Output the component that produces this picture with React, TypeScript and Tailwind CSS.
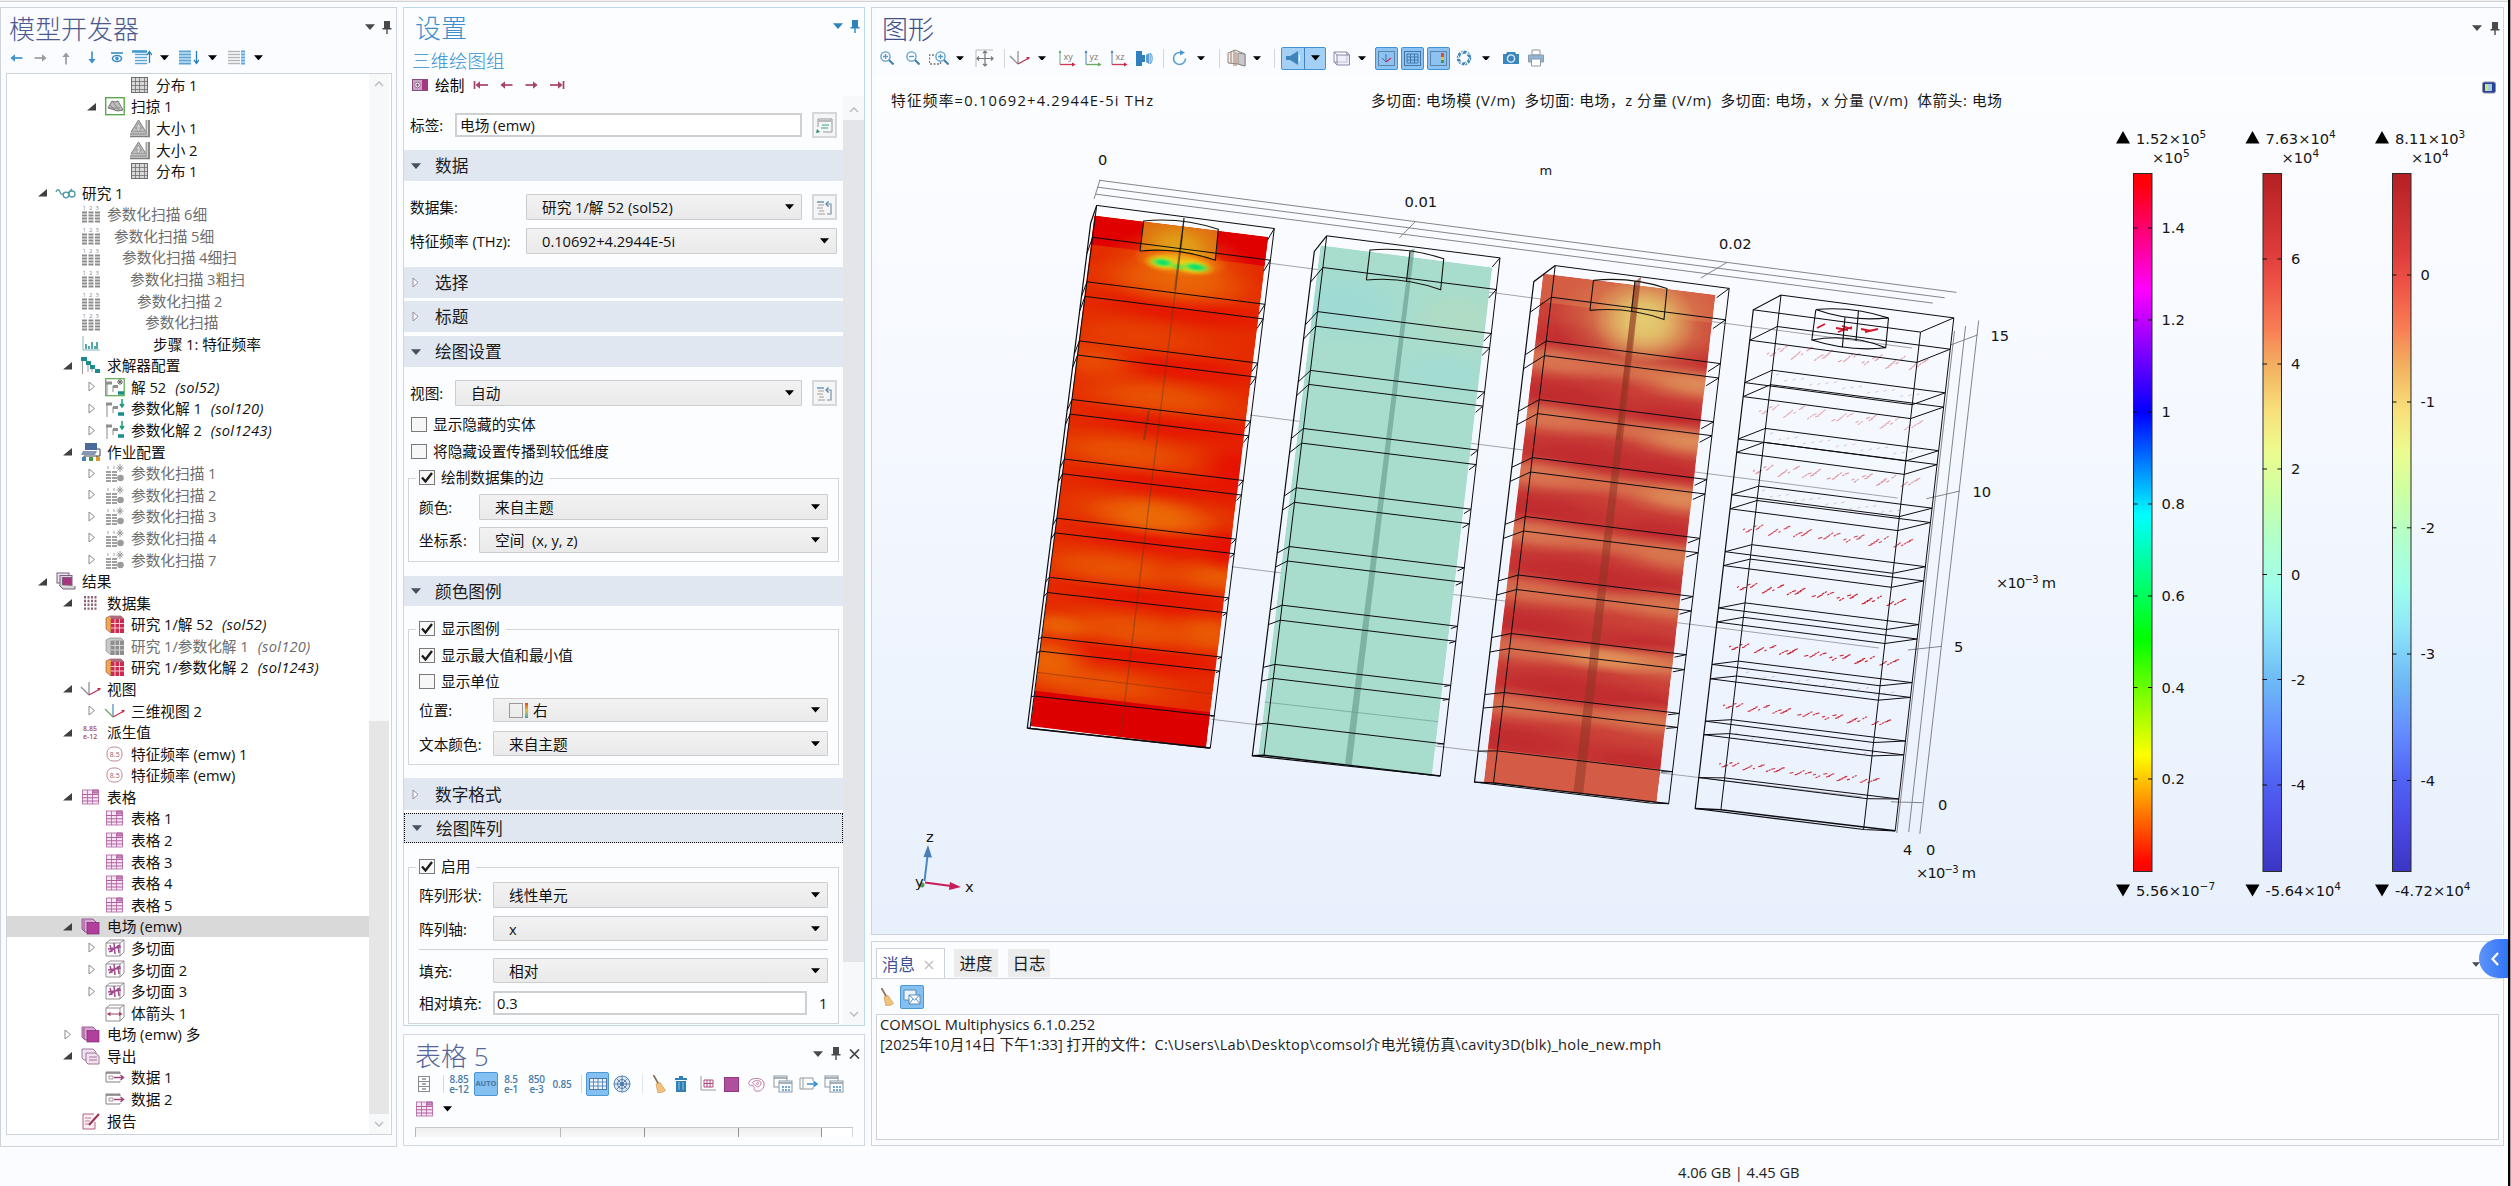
import React from 'react';

type Pt = [number, number];

/* ---------- small shared glyphs ---------- */

function Caret({ c = '#000', w = 10 }: { c?: string; w?: number }) {
  return (
    <svg width={w} height={w * 0.6} viewBox="0 0 10 6" className="shrink-0">
      <path d="M0 .3h10L5 6z" fill={c} />
    </svg>
  );
}

function Pin({ c = '#4a4a4a' }: { c?: string }) {
  return (
    <svg width="10" height="13" viewBox="0 0 10 13" className="shrink-0">
      <path d="M2 0h6v7h1.5v1.5H5.7V13H4.3V8.500H.5V7H2z" fill={c} />
    </svg>
  );
}

function Arrow({ dir, c, bar }: { dir: 'l' | 'r' | 'u' | 'd'; c: string; bar?: boolean }) {
  const rot = { l: 180, r: 0, u: 270, d: 90 }[dir];
  return (
    <svg width="16" height="16" viewBox="0 0 16 16">
      <g transform={`rotate(${rot} 8 8)`} fill="none" stroke={c} strokeWidth="1.7">
        <path d={bar ? 'M1 8h11' : 'M1.500 8h11'} />
        <path d="M9 4.300L13.500 8L9 11.700z" fill={c} stroke="none" />
        {bar && <path d="M14.500 4v8" />}
      </g>
    </svg>
  );
}

/* ---------- tree ---------- */

type IconName =
  | 'grid' | 'sweep' | 'size' | 'study' | 'param' | 'step' | 'solver' | 'sol' | 'solp' | 'job' | 'jobp'
  | 'results' | 'dataset' | 'cube' | 'cubeg' | 'view' | 'view3' | 'deriv' | 'eval' | 'table' | 'group'
  | 'slice' | 'varrow' | 'export' | 'data' | 'report';

function Bars({ c }: { c: string }) {
  return (
    <g>
      {[1, 7.5, 14].map((x, i) => (
        <g key={x}>
          <text x={x + 0.5} y="5" fontSize="6" fill={c}>{i + 1}</text>
          {[7.5, 10.5, 13.5, 16.5].map((y) => (
            <path key={y} d={`M${x} ${y}h5`} stroke={c} strokeWidth="2" />
          ))}
        </g>
      ))}
    </g>
  );
}

function SolGlyph({ arrow }: { arrow: boolean }) {
  return (
    <g fill="none">
      <path d="M2 18V5h5M8 14V8h5" stroke="#8a8a8a" />
      <path d="M1 5h6M8 8.500h5" stroke="#8f8f8f" strokeWidth="3" />
      <path d="M13 15h6" stroke="#1b8c8c" strokeWidth="3.500" />
      {arrow ? (
        <path d="M17 0v7M15 5l2 3 2-3" stroke="#1b9a80" strokeWidth="1.500" />
      ) : (
        <path d="M15 1v6M12 4h6M13 2l4 4M17 2l-4 4" stroke="#666" strokeWidth="1" />
      )}
    </g>
  );
}

function TreeIcon({ name }: { name: IconName }) {
  const body: Record<IconName, React.ReactNode> = {
    grid: (
      <g stroke="#6e6e6e" fill="none">
        <rect x="1.500" y="1.500" width="16" height="15" fill="#d9d9d9" />
        <path d="M5.500 2v14M9.500 2v14M14.500 2v14M2 5.500h15M2 9.500h15M2 13.500h15" strokeWidth=".8" />
      </g>
    ),
    sweep: (
      <g>
        <rect x=".7" y=".7" width="18.500" height="17" fill="#fff" stroke="#5aa84e" strokeWidth="1.400" />
        <path d="M3 11L7 4l3 1 3-1 5 9-5 1z" fill="#bdbdbd" stroke="#777" />
        <path d="M5 8l6 6M8 5l6 8M4 11h11" stroke="#777" strokeWidth=".7" />
      </g>
    ),
    size: (
      <g>
        <path d="M8.500 1L16 13H1z" fill="#bdbdbd" stroke="#808080" />
        <path d="M5 9h7M8.500 4L11 9l-2.500 4L6 9z" fill="#dcdcdc" stroke="#808080" strokeWidth=".6" />
        <path d="M0 15h16.500V1" stroke="#a5a5a5" fill="none" strokeWidth="2" />
        <path d="M0 17.300h19V1" stroke="#7d7d7d" fill="none" strokeWidth="1.800" />
      </g>
    ),
    study: (
      <g fill="none" stroke="#4f9aa5" strokeWidth="1.300">
        <path d="M0 8c1-3 3-3 4 0s3 3 4 1" />
        <circle cx="10" cy="11" r="2.800" />
        <circle cx="16" cy="10" r="3" />
        <path d="M12 9l4-4" />
      </g>
    ),
    param: <Bars c="#8b8b8b" />,
    step: (
      <g stroke="#1b8c8c" fill="none">
        <path d="M2 1v14h17" stroke="#7fb5c2" />
        <path d="M5 9v5M8 11v3M11 7v7M14 11v3M16 7v7" strokeWidth="1.500" />
      </g>
    ),
    solver: (
      <g>
        <path d="M1.500 18V3M7 16V7M11 16v-6" stroke="#9a9a9a" fill="none" />
        <path d="M0 1h6v4H0zM5 5h5v4H5zM9 9h5v4H9zM14 13h5v4h-5z" fill="#1b8c8c" />
      </g>
    ),
    sol: (
      <g>
        <rect x=".7" y=".7" width="18.500" height="17" fill="#fff" stroke="#5aa84e" strokeWidth="1.200" />
        <SolGlyph arrow={false} />
      </g>
    ),
    solp: <SolGlyph arrow />,
    job: (
      <g>
        <path d="M4 0h12v7H4z" fill="#4b6a9c" />
        <path d="M2 8h14l-2 4H0z" fill="#8497b5" />
        <path d="M16 6h3v7H3v3M16 13v3" fill="none" stroke="#444" />
        <rect x="1" y="14" width="4" height="4" fill="#4b7fb5" />
        <rect x="8" y="14" width="4" height="4" fill="#3f9a4d" />
        <rect x="15" y="14" width="4" height="4" fill="#e09a2a" />
      </g>
    ),
    jobp: (
      <g>
        {[1, 7].map((x) => (
          <g key={x} stroke="#a0a0a0" strokeWidth="1.800">
            <path d={`M${x} 8h5M${x} 11h5M${x} 14h5M${x} 17h5`} />
            <path d={`M${x + 2} 2v3`} strokeWidth="1" />
          </g>
        ))}
        <path d="M15 0v8M11.500 4h7M12.500 1.500l5 5M17.500 1.500l-5 5" stroke="#999" />
        <circle cx="15.500" cy="14" r="3.300" fill="#9b9b9b" />
      </g>
    ),
    results: (
      <g stroke="#77607a">
        <rect x="1" y="1" width="12" height="10" fill="#efe3ee" />
        <rect x="4" y="3.500" width="12" height="10" fill="#e8cfe5" />
        <rect x="6.500" y="5.500" width="9" height="8" fill="#a8357f" />
        <path d="M3 13l4 4h12v-3" fill="#d8d8d8" />
      </g>
    ),
    dataset: (
      <g stroke="#8d6272" strokeWidth="2">
        {[4, 7.5, 11, 14.5].map((x) => (
          <path key={x} d={`M${x} 2v14`} strokeDasharray="2.400 1.400" />
        ))}
      </g>
    ),
    cube: (
      <g>
        <path d="M1 3l4-2h11l3 3H6v14l-5-4z" fill="#f0a850" stroke="#9b5a50" strokeWidth=".7" />
        <path d="M5 1h11l3 3H6z" fill="#b06a80" />
        <rect x="6" y="4" width="13" height="14" fill="#cc2a4e" />
        <path d="M6 8.500h13M6 13h13M10 4v14M14.500 4v14" stroke="#f5c9cf" strokeWidth="1" />
      </g>
    ),
    cubeg: (
      <g>
        <path d="M1 3l4-2h11l3 3H6v14l-5-4z" fill="#c9c9c9" stroke="#8a8a8a" strokeWidth=".7" />
        <rect x="6" y="4" width="13" height="14" fill="#8e8e8e" />
        <path d="M6 8.500h13M6 13h13M10 4v14M14.500 4v14" stroke="#d5d5d5" strokeWidth="1" />
      </g>
    ),
    view: (
      <g fill="none" strokeWidth="1.200">
        <path d="M8 2v13M0 7l8 8" stroke="#8a8a8a" />
        <path d="M8 15l11-6" stroke="#b8304f" />
        <path d="M16 8l4 0-2 3z" fill="#b8304f" />
      </g>
    ),
    view3: (
      <g fill="none" strokeWidth="1.200">
        <path d="M8 2v13" stroke="#4a86c0" />
        <path d="M0 7l8 8" stroke="#6aa860" />
        <path d="M8 15l11-6" stroke="#c8304f" />
        <path d="M16 8l4 0-2 3z" fill="#c8304f" />
      </g>
    ),
    deriv: (
      <g fill="#a8506a" fontSize="7" fontWeight="600">
        <text x="2" y="8">8.85</text>
        <text x="2" y="16">e-12</text>
      </g>
    ),
    eval: (
      <g>
        <rect x="2" y="2" width="15" height="14" rx="6" fill="#fff" stroke="#c08a9d" />
        <text x="4.800" y="11.500" fontSize="7" fill="#a8506a">8.5</text>
      </g>
    ),
    table: (
      <g stroke="#b0609f" fill="none">
        <rect x="1.500" y="2" width="16" height="14" fill="#f6e6f3" strokeWidth=".8" />
        <path d="M1 6.500h17M1 9.800h17M1 13h17" strokeWidth="1.100" />
        <path d="M6.500 2v14M11.500 2v14" strokeWidth=".8" />
        <path d="M12 2h5v3h-5z" fill="#c98abc" />
      </g>
    ),
    group: (
      <g stroke="#7c2a72" strokeWidth=".7">
        <path d="M1 2h11l3 3v10H4L1 12z" fill="#d9a6d2" />
        <rect x="6" y="5.500" width="12" height="11.500" fill="#b23f9c" />
        <path d="M3 3v11" />
      </g>
    ),
    slice: (
      <g fill="none" stroke="#8a8088" strokeWidth=".9">
        <path d="M1 4l4-3h14v12l-4 4H1zM1 4h14v13M15 4l4-3" />
        <path d="M5 6l2 7M9 4l1 11M13 6l1 8M3 10l13-2M4 13l11-7" stroke="#a04a90" strokeWidth="1.500" />
      </g>
    ),
    varrow: (
      <g fill="none" stroke="#8a8088" strokeWidth=".9">
        <path d="M1 4l4-3h14v12l-4 4H1zM1 4h14v13M15 4l4-3" />
        <path d="M4 10h11M5.500 8.500L3 10l2.500 1.500M14 8.500l2.500 1.500-2.500 1.500" stroke="#a0406a" strokeWidth="1.200" />
      </g>
    ),
    export: (
      <g fill="#f0e2ee" stroke="#9a6690" strokeWidth=".9">
        <path d="M1 2h11l3 3v8H3L1 11z" />
        <path d="M5 6h9l4 3v8H7l-2-2z" />
        <path d="M8 10h8M8 13h8" />
      </g>
    ),
    data: (
      <g fill="none" stroke="#8a8088">
        <path d="M15 6V4H1v10h14v-1" />
        <path d="M1 5h14" strokeWidth="1.600" />
        <path d="M4 8h4v3H4z" strokeWidth=".8" />
        <path d="M9 9.500h9M15.500 7l3 2.500-3 2.500" stroke="#a0407a" strokeWidth="1.400" />
      </g>
    ),
    report: (
      <g fill="none" stroke="#b0607f">
        <path d="M14 10v7H2V2h11" fill="#fbeef2" />
        <path d="M4 6h6M4 9h5M4 12h5" strokeWidth=".8" />
        <path d="M8 13L18 2" stroke="#9c2f52" strokeWidth="2" />
      </g>
    ),
  };
  return (
    <svg width="20" height="18" viewBox="0 0 20 18" className="shrink-0 overflow-visible">
      {body[name]}
    </svg>
  );
}

interface Row {
  lvl: 1 | 2 | 3 | 4;
  icon: IconName;
  text: string;
  tag?: string;
  tri?: 'open' | 'closed';
  gray?: boolean;
  sel?: boolean;
  ml?: string;
}

const rows: Row[] = [
  { lvl: 4, icon: 'grid', text: '分布 1' },
  { lvl: 3, icon: 'sweep', text: '扫掠 1', tri: 'open' },
  { lvl: 4, icon: 'size', text: '大小 1' },
  { lvl: 4, icon: 'size', text: '大小 2' },
  { lvl: 4, icon: 'grid', text: '分布 1' },
  { lvl: 1, icon: 'study', text: '研究 1', tri: 'open' },
  { lvl: 2, icon: 'param', text: '参数化扫描 6细', gray: true },
  { lvl: 2, icon: 'param', text: '参数化扫描 5细', gray: true, ml: 'ml-[13px]' },
  { lvl: 2, icon: 'param', text: '参数化扫描 4细扫', gray: true, ml: 'ml-[21px]' },
  { lvl: 2, icon: 'param', text: '参数化扫描 3粗扫', gray: true, ml: 'ml-[29px]' },
  { lvl: 2, icon: 'param', text: '参数化扫描 2', gray: true, ml: 'ml-[36px]' },
  { lvl: 2, icon: 'param', text: '参数化扫描', gray: true, ml: 'ml-[44px]' },
  { lvl: 2, icon: 'step', text: '步骤 1: 特征频率', ml: 'ml-[52px]' },
  { lvl: 2, icon: 'solver', text: '求解器配置', tri: 'open' },
  { lvl: 3, icon: 'sol', text: '解 52', tag: '(sol52)', tri: 'closed' },
  { lvl: 3, icon: 'solp', text: '参数化解 1', tag: '(sol120)', tri: 'closed' },
  { lvl: 3, icon: 'solp', text: '参数化解 2', tag: '(sol1243)', tri: 'closed' },
  { lvl: 2, icon: 'job', text: '作业配置', tri: 'open' },
  { lvl: 3, icon: 'jobp', text: '参数化扫描 1', tri: 'closed', gray: true },
  { lvl: 3, icon: 'jobp', text: '参数化扫描 2', tri: 'closed', gray: true },
  { lvl: 3, icon: 'jobp', text: '参数化扫描 3', tri: 'closed', gray: true },
  { lvl: 3, icon: 'jobp', text: '参数化扫描 4', tri: 'closed', gray: true },
  { lvl: 3, icon: 'jobp', text: '参数化扫描 7', tri: 'closed', gray: true },
  { lvl: 1, icon: 'results', text: '结果', tri: 'open' },
  { lvl: 2, icon: 'dataset', text: '数据集', tri: 'open' },
  { lvl: 3, icon: 'cube', text: '研究 1/解 52', tag: '(sol52)' },
  { lvl: 3, icon: 'cubeg', text: '研究 1/参数化解 1', tag: '(sol120)', gray: true },
  { lvl: 3, icon: 'cube', text: '研究 1/参数化解 2', tag: '(sol1243)' },
  { lvl: 2, icon: 'view', text: '视图', tri: 'open' },
  { lvl: 3, icon: 'view3', text: '三维视图 2', tri: 'closed' },
  { lvl: 2, icon: 'deriv', text: '派生值', tri: 'open' },
  { lvl: 3, icon: 'eval', text: '特征频率 (emw) 1' },
  { lvl: 3, icon: 'eval', text: '特征频率 (emw)' },
  { lvl: 2, icon: 'table', text: '表格', tri: 'open' },
  { lvl: 3, icon: 'table', text: '表格 1' },
  { lvl: 3, icon: 'table', text: '表格 2' },
  { lvl: 3, icon: 'table', text: '表格 3' },
  { lvl: 3, icon: 'table', text: '表格 4' },
  { lvl: 3, icon: 'table', text: '表格 5' },
  { lvl: 2, icon: 'group', text: '电场 (emw)', tri: 'open', sel: true },
  { lvl: 3, icon: 'slice', text: '多切面', tri: 'closed' },
  { lvl: 3, icon: 'slice', text: '多切面 2', tri: 'closed' },
  { lvl: 3, icon: 'slice', text: '多切面 3', tri: 'closed' },
  { lvl: 3, icon: 'varrow', text: '体箭头 1' },
  { lvl: 2, icon: 'group', text: '电场 (emw) 多', tri: 'closed' },
  { lvl: 2, icon: 'export', text: '导出', tri: 'open' },
  { lvl: 3, icon: 'data', text: '数据 1' },
  { lvl: 3, icon: 'data', text: '数据 2' },
  { lvl: 2, icon: 'report', text: '报告' },
];

const indent = { 1: 'pl-[30px]', 2: 'pl-[55px]', 3: 'pl-[79px]', 4: 'pl-[104px]' };

function TreeRow({ r }: { r: Row }) {
  return (
    <div
      className={`flex h-[21.58px] items-center whitespace-nowrap ${indent[r.lvl]} ${r.sel ? 'bg-[#d9d9d9]' : ''} ${r.gray ? 'text-[#6d6d6d]' : 'text-[#111]'}`}
    >
      <span className="flex w-[19px] shrink-0 items-center pl-[1px]">
        {r.tri === 'open' && (
          <svg width="9" height="9" viewBox="0 0 9 9"><path d="M9 1v7.500H0z" fill="#404040" /></svg>
        )}
        {r.tri === 'closed' && (
          <svg width="9" height="11" viewBox="0 0 9 11" className="ml-[1px]">
            <path d="M1 1l5.500 4.500L1 10z" fill="#fff" stroke="#8a8a8a" />
          </svg>
        )}
      </span>
      <TreeIcon name={r.icon} />
      <span className={r.ml ?? 'ml-[6px]'}>{r.text}</span>
      {r.tag && <span className="ml-[9px] italic tracking-[.25px]">{r.tag}</span>}
    </div>
  );
}

function ListGlyph({ arrow }: { arrow?: 'u' | 'd' }) {
  const c = arrow ? '#3f97cf' : '#a9a9a9';
  return (
    <svg width="20" height="15" viewBox="0 0 20 15">
      {[1.5, 4.5, 7.5, 10.5, 13.5].map((y) => (
        <path key={y} d={`M${arrow === 'u' ? 3 : 0} ${y}h12`} stroke={c} strokeWidth={arrow === 'd' ? 2 : 1.4} opacity=".85" />
      ))}
      {!arrow && <path d="M13 1.500h4M13 4.500h4M13 7.500h4M13 10.500h4M13 13.500h4" stroke="#5aa6dc" strokeWidth="2" />}
      {arrow === 'u' && <path d="M0 1.500h15" stroke="#3f97cf" strokeWidth="2.500" />}
      {arrow === 'u' && <path d="M17.500 13V2M15 5l2.500-3.500L20 5" stroke="#2b7fb8" fill="none" strokeWidth="1.300" />}
      {arrow === 'd' && <path d="M17.500 1v12M15 10l2.500 3.500L20 10" stroke="#2b7fb8" fill="none" strokeWidth="1.300" />}
    </svg>
  );
}

function ModelBuilder() {
  return (
    <section className="flex h-[1140px] w-[397px] shrink-0 flex-col border border-[#cfd3de] bg-[#fbfcff] pl-[5px]">
      <header className="flex h-[34px] items-center justify-between pt-[8px] pr-[4px] pl-[3px]">
        <h1 className="text-[26px] leading-none font-light text-[#4b5a8e]">模型开发器</h1>
        <div className="flex items-center gap-[7px] pb-[4px]">
          <Caret c="#4a4a4a" />
          <Pin />
        </div>
      </header>
      <div className="flex h-[31px] items-center pl-[2px]">
        <span className="w-[25px]"><Arrow dir="l" c="#3f92c8" /></span>
        <span className="w-[25px]"><Arrow dir="r" c="#9c9c9c" /></span>
        <span className="w-[26px]"><Arrow dir="u" c="#9c9c9c" /></span>
        <span className="w-[26px]"><Arrow dir="d" c="#3f92c8" /></span>
        <span className="w-[22px]">
          <svg width="14" height="13" viewBox="0 0 14 13" fill="none" stroke="#3a8cc4" strokeWidth="1.600">
            <path d="M1 2h12" /><ellipse cx="7" cy="7.500" rx="4.500" ry="3" /><circle cx="7" cy="7.500" r="1" />
          </svg>
        </span>
        <ListGlyph arrow="u" />
        <span className="w-[27px] pl-[8px]"><Caret w={9} /></span>
        <ListGlyph arrow="d" />
        <span className="w-[29px] pl-[9px]"><Caret w={9} /></span>
        <ListGlyph />
        <span className="pl-[6px]"><Caret w={9} /></span>
      </div>
      <div className="flex h-[1062px] w-[386px] border border-[#cdd3da] bg-white">
        <div className="w-[362px] text-[14.670px]">
          {rows.map((r, i) => <TreeRow key={i} r={r} />)}
        </div>
        <div className="flex w-[20px] flex-col items-center bg-[#f7f8fa]">
          <Chevron up />
          <div className="mt-[627px] h-[393px] w-full bg-[#e6e6e6]" />
          <Chevron />
        </div>
      </div>
    </section>
  );
}

function Chevron({ up }: { up?: boolean }) {
  return (
    <span className="flex h-[20px] items-center">
      <svg width="10" height="6" viewBox="0 0 10 6" fill="none" stroke="#b9b9b9" strokeWidth="1.300">
        <path d={up ? 'M1 5l4-4 4 4' : 'M1 1l4 4 4-4'} />
      </svg>
    </span>
  );
}

/* ---------- settings ---------- */

function Select({ children, className = '' }: { children: React.ReactNode; className?: string }) {
  return (
    <div className={`flex h-full items-center justify-between rounded-[1px] border border-[#cdcdcf] bg-linear-to-b from-[#f2f2f3] to-[#eaeaeb] pr-[7px] pl-[15px] ${className}`}>
      <span className="flex items-center gap-[5px] whitespace-pre">{children}</span>
      <Caret w={9} />
    </div>
  );
}

function SideButton({ kind }: { kind: 'rename' | 'goto' }) {
  return (
    <div className="ml-[10px] flex h-[26px] w-[25px] items-center justify-center border-2 border-[#d7d7d9] bg-[#f4f5f6]">
      {kind === 'rename' ? (
        <svg width="17" height="17" viewBox="0 0 17 17" fill="none" stroke="#999">
          <path d="M2 10V2h14v13H7" /><path d="M2 4h14" strokeWidth="2" stroke="#bbb" />
          <path d="M6 8h7M5 11h7" stroke="#3fa08a" /><path d="M0 16l1-4 3 3z" fill="#2b8c72" stroke="none" />
        </svg>
      ) : (
        <svg width="17" height="17" viewBox="0 0 17 17" fill="none" stroke="#7d8fa0" strokeWidth="1.200">
          <path d="M2 6h6M1 9h6M3 12h5M2 15h7" stroke="#a79d96" /><path d="M1 3h7" stroke="#4a7fa8" />
          <path d="M11 15h4V5h-4" /><path d="M12.500 2.500L10 5l2.500 2.500" stroke="#4a86b0" />
        </svg>
      )}
    </div>
  );
}

function Section({ title, open, className }: { title: string; open?: boolean; className: string }) {
  return (
    <div className={`flex items-center bg-[#e0e7f1] pl-[7px] text-[16.670px] text-[#1c1c1c] ${className}`}>
      <span className="w-[24px]">
        {open ? <Caret c="#45525f" /> : (
          <svg width="8" height="11" viewBox="0 0 8 11" className="ml-[1px]"><path d="M1 1l5 4.500L1 10z" fill="#fff" stroke="#909090" /></svg>
        )}
      </span>
      {title}
    </div>
  );
}

function Check({ label, on, className = '' }: { label: string; on?: boolean; className?: string }) {
  return (
    <div className={`flex h-[18px] items-center gap-[6px] ${className}`}>
      <span className="flex h-[15px] w-[16px] items-center justify-center border border-[#7a7a7a] bg-[#f7f7f7]">
        {on && (
          <svg width="12" height="11" viewBox="0 0 12 11"><path d="M1 5.500l3.500 4L11 1" fill="none" stroke="#1a1a1a" strokeWidth="2.300" /></svg>
        )}
      </span>
      {label}
    </div>
  );
}

function FieldSet({ legend, children, className }: { legend: string; children: React.ReactNode; className: string }) {
  return (
    <div className={`ml-[4px] w-[431px] border border-[#d3d5da] pr-[10px] ${className}`}>
      <div className="-mt-[11px] flex">
        <Check label={legend} on className="ml-[7px] bg-[#fbfcff] pr-[6px] pl-[3px]" />
      </div>
      <div className="pl-[10px]">{children}</div>
    </div>
  );
}

function FRow({ label, lw, className, children }: { label: string; lw: string; className: string; children: React.ReactNode }) {
  return (
    <div className={`flex items-center ${className}`}>
      <span className={`shrink-0 whitespace-nowrap ${lw}`}>{label}</span>
      {children}
    </div>
  );
}

function Settings() {
  return (
    <section className="flex h-[1020px] w-[462px] flex-col overflow-hidden border border-[#bcd9ec] border-l-[#cfd6e2] bg-[#fbfdff]">
      <header className="flex h-[42px] items-center justify-between pr-[4px] pl-[11px]">
        <h1 className="text-[26px] leading-none font-light text-[#3c8fce]">设置</h1>
        <div className="flex items-center gap-[7px] pb-[4px]"><Caret c="#2f83bd" /><Pin c="#2f83bd" /></div>
      </header>
      <div className="flex h-[26px] items-center pl-[8px] text-[18.500px] leading-none font-light text-[#2f8fd0]">三维绘图组</div>
      <div className="flex h-[22px] items-center pl-[8px] text-[14.670px]">
        <svg width="16" height="12" viewBox="0 0 16 12">
          <rect x=".5" y=".5" width="15" height="11" fill="#c9a4c2" stroke="#8a4a80" />
          <path d="M10 1h5v10h-5z" fill="#a8357f" /><circle cx="5.500" cy="6" r="2.800" fill="#fff" stroke="#9a6a90" /><path d="M4 6h3M5.500 4.500v3" stroke="#7a3a6c" />
        </svg>
        <span className="ml-[7px] w-[38px]">绘制</span>
        <span className="w-[25px]"><Arrow dir="l" c="#a8416c" bar /></span>
        <span className="w-[26px]"><Arrow dir="l" c="#a8416c" /></span>
        <span className="w-[25px]"><Arrow dir="r" c="#a8416c" /></span>
        <Arrow dir="r" c="#a8416c" bar />
      </div>
      <div className="flex text-[14.670px] text-[#111]">
        <div className="h-[929px] w-[439px] overflow-hidden">
          <FRow label="标签:" lw="w-[45px]" className="mt-[16px] h-[26px] pl-[6px]">
            <div className="flex h-[24px] w-[347px] items-center border-2 border-[#cfd0d2] bg-white pl-[3px]">电场 (emw)</div>
            <SideButton kind="rename" />
          </FRow>
          <Section title="数据" open className="mt-[12px] h-[31px]" />
          <FRow label="数据集:" lw="w-[116px]" className="mt-[13px] h-[26px] pl-[6px]">
            <Select className="w-[276px]">研究 1/解 52 (sol52)</Select>
            <SideButton kind="goto" />
          </FRow>
          <FRow label="特征频率 (THz):" lw="w-[116px]" className="mt-[8px] h-[26px] pl-[6px]">
            <Select className="w-[311px]">0.10692+4.2944E-5i</Select>
          </FRow>
          <Section title="选择" className="mt-[13px] h-[31px]" />
          <Section title="标题" className="mt-[3px] h-[31px]" />
          <Section title="绘图设置" open className="mt-[4px] h-[31px]" />
          <FRow label="视图:" lw="w-[45px]" className="mt-[13px] h-[26px] pl-[6px]">
            <Select className="w-[347px]">自动</Select>
            <SideButton kind="goto" />
          </FRow>
          <Check label="显示隐藏的实体" className="mt-[9px] pl-[7px]" />
          <Check label="将隐藏设置传播到较低维度" className="mt-[9px] pl-[7px]" />
          <FieldSet legend="绘制数据集的边" className="mt-[18px] h-[84px]">
            <FRow label="颜色:" lw="w-[60px]" className="mt-[8px] h-[26px]"><Select className="grow">来自主题</Select></FRow>
            <FRow label="坐标系:" lw="w-[60px]" className="mt-[7px] h-[26px]"><Select className="grow">空间  (x, y, z)</Select></FRow>
          </FieldSet>
          <Section title="颜色图例" open className="mt-[14px] h-[30px]" />
          <FieldSet legend="显示图例" className="mt-[23px] h-[136px]">
            <Check label="显示最大值和最小值" on className="mt-[9px]" />
            <Check label="显示单位" className="mt-[8px]" />
            <FRow label="位置:" lw="w-[74px]" className="mt-[8px] h-[24px]">
              <Select className="grow">
                <span className="flex gap-[2px]">
                  <span className="h-[15px] w-[14px] border border-[#999]" />
                  <span className="h-[15px] w-[3px] bg-linear-to-b from-[#e04020] via-[#e0c040] to-[#30a0b0]" />
                </span>
                右
              </Select>
            </FRow>
            <FRow label="文本颜色:" lw="w-[74px]" className="mt-[9px] h-[25px]"><Select className="grow">来自主题</Select></FRow>
          </FieldSet>
          <Section title="数字格式" className="mt-[13px] h-[32px]" />
          <Section title="绘图阵列" open className="mt-[3px] h-[30px] border border-dotted border-black" />
          <FieldSet legend="启用" className="mt-[24px] h-[157px]">
            <FRow label="阵列形状:" lw="w-[74px]" className="mt-[7px] h-[26px]"><Select className="grow">线性单元</Select></FRow>
            <FRow label="阵列轴:" lw="w-[74px]" className="mt-[8px] h-[25px]"><Select className="grow">x</Select></FRow>
            <div className="mt-[8px] h-px bg-[#cfd0d4]" />
            <FRow label="填充:" lw="w-[74px]" className="mt-[8px] h-[25px]"><Select className="grow">相对</Select></FRow>
            <FRow label="相对填充:" lw="w-[74px]" className="mt-[8px] h-[24px]">
              <div className="flex h-full w-[314px] items-center border-2 border-[#cfd0d2] bg-white pl-[2px]">0.3</div>
              <span className="ml-[12px]">1</span>
            </FRow>
          </FieldSet>
        </div>
        <div className="flex w-[21px] flex-col items-center bg-[#f7f8fa]">
          <span className="mt-[4px]"><Chevron up /></span>
          <div className="h-[842px] w-full bg-[#e4e5e8]" />
          <span className="mt-[42px]"><Chevron /></span>
        </div>
      </div>
    </section>
  );
}

/* ---------- table window ---------- */

function NumFmt({ a, b, className }: { a: string; b?: string; className: string }) {
  return (
    <span className={`flex flex-col items-center text-[10px] leading-[10px] font-semibold tracking-tight text-[#4a7ca8] ${className}`}>
      <span>{a}</span>
      {b && <span>{b}</span>}
    </span>
  );
}

function Broom() {
  return (
    <svg width="14" height="18" viewBox="0 0 14 18">
      <path d="M1.500 0l5 9" stroke="#8a6a50" strokeWidth="1.600" />
      <path d="M4 9l4-1.500 5.500 8L9 18H6z" fill="#f0c27a" stroke="#c98f50" strokeWidth=".6" />
    </svg>
  );
}

function CopyTable() {
  return (
    <svg width="20" height="18" viewBox="0 0 20 18" fill="#fff" stroke="#8a97a5">
      <rect x="1" y="1" width="13" height="11" /><path d="M1 3h13" strokeWidth="1.500" />
      <rect x="6" y="6" width="13" height="11" /><path d="M6 8h13" strokeWidth="1.500" />
      <path d="M9 12h8M9 15h8" stroke="#3f8fc8" strokeWidth="1.700" strokeDasharray="2 1" />
    </svg>
  );
}

function TableWindow() {
  return (
    <section className="mt-[8px] flex h-[112px] w-[462px] flex-col border border-[#cfd8e4] bg-[#fbfdff]">
      <header className="flex h-[34px] items-end justify-between pr-[4px] pl-[11px]">
        <h1 className="text-[26px] leading-none font-light text-[#56659a]">表格 5</h1>
        <div className="flex items-center gap-[8px] pb-[9px]">
          <Caret c="#4a4a4a" /><Pin />
          <svg width="11" height="10" viewBox="0 0 11 10"><path d="M1 .5l9 9M10 .5l-9 9" stroke="#444" strokeWidth="1.700" /></svg>
        </div>
      </header>
      <div className="flex h-[30px] items-center pl-[14px]">
        <svg width="12" height="16" viewBox="0 0 12 16" fill="none" stroke="#8a8a8a"><rect x=".5" y=".5" width="11" height="15" /><path d="M0 5.500h12M0 10.500h12" /><path d="M4 3h4M4 8h4M4 13h4" stroke="#555" /></svg>
        <span className="ml-[13px] h-[18px] w-px bg-[#d5d8dc]" />
        <NumFmt a="8.85" b="e-12" className="ml-[4px] w-[22px]" />
        <span className="ml-[4px] flex h-[24px] w-[24px] items-center justify-center rounded-[2px] border border-[#4a97d4] bg-[#84c0f2] text-[7.500px] font-bold text-[#4a76a0]">AUTO</span>
        <NumFmt a="8.5" b="e-1" className="ml-[4px] w-[18px]" />
        <NumFmt a="850" b="e-3" className="ml-[7px] w-[19px]" />
        <NumFmt a="0.85" className="ml-[6px] w-[20px]" />
        <span className="ml-[9px] h-[18px] w-px bg-[#d5d8dc]" />
        <span className="ml-[4px] flex h-[24px] w-[23px] items-center justify-center rounded-[2px] border border-[#4a97d4] bg-[#84c0f2]">
          <svg width="18" height="12" viewBox="0 0 18 12" fill="#e8f3fc" stroke="#4a76a8"><rect x=".5" y=".5" width="17" height="11" /><path d="M0 4h18M0 8h18M4.500 0v12M9 0v12M13.500 0v12" strokeWidth=".8" /></svg>
        </span>
        <svg width="18" height="18" viewBox="0 0 18 18" className="ml-[4px]" fill="#dfeaf5" stroke="#4a76a8" strokeWidth=".9"><circle cx="9" cy="9" r="8" /><circle cx="9" cy="9" r="4.500" /><circle cx="9" cy="9" r="1.500" /><path d="M1 9h16M9 1v16M3.300 3.300l11.400 11.400M14.700 3.300L3.300 14.700" /></svg>
        <span className="ml-[11px] h-[18px] w-px bg-[#e2e4e8]" />
        <span className="ml-[9px]"><Broom /></span>
        <svg width="12" height="16" viewBox="0 0 12 16" className="ml-[9px]"><path d="M0 2h12v2H0zM4 0h4v2H4zM1 5h10v11H1z" fill="#2f7fb5" /><path d="M4 6v8M8 6v8" stroke="#8fc4e6" /></svg>
        <svg width="17" height="16" viewBox="0 0 17 16" className="ml-[12px]" fill="none" stroke="#999"><path d="M2 0v14h15" /><path d="M5 4h9v7H5zM5 7.500h9M8 4v7M11 4v7" stroke="#b0487e" /></svg>
        <span className="ml-[8px] h-[15px] w-[15px] border border-[#8f3a80] bg-[#b04f9e]" />
        <svg width="17" height="15" viewBox="0 0 17 15" className="ml-[9px]" fill="none" stroke="#c37aa6"><path d="M1 5c2-5 14-5 15 1s-4 9-8 8 0-4-3-5S0 8 1 5z" /><path d="M5 5c2-2 8-2 8 1s-3 5-5 3-4-2-3-4z" /><circle cx="9.500" cy="6.500" r="1" /></svg>
        <span className="ml-[8px]"><CopyTable /></span>
        <svg width="19" height="14" viewBox="0 0 19 14" className="ml-[6px]" fill="none" stroke="#999"><path d="M14 4V1H1v11h13v-2M4 1v11" /><path d="M8 7h9M14.500 4.500L18 7l-3.500 2.500" stroke="#3a8fd0" strokeWidth="1.600" /></svg>
        <span className="ml-[6px]"><CopyTable /></span>
      </div>
      <div className="flex h-[20px] items-center gap-[8px] pl-[11px]"><TreeIcon name="table" /><Caret w={9} /></div>
      <div className="mt-[8px] ml-[11px] flex h-[10px] w-[438px] border-t border-[#c4c7cc] bg-linear-to-b from-[#efeff0] to-[#f8f8f9]">
        <span className="w-[146px] border-x border-x-[#b5b8bd]" />
        <span className="w-[84px] border-r border-r-[#8f9297]" />
        <span className="w-[94px] border-r border-r-[#8f9297]" />
        <span className="w-[83px] border-r border-r-[#8f9297]" />
        <span className="grow border-r border-r-[#d5d5d8] bg-white" />
      </div>
    </section>
  );
}

/* ---------- graphics toolbar ---------- */

function Slot({ w, children }: { w: string; children?: React.ReactNode }) {
  return <span className={`flex h-full shrink-0 items-center justify-center ${w}`}>{children}</span>;
}
const Sep = ({ w }: { w: string }) => <Slot w={w}><span className="h-[19px] w-px bg-[#d3d6da]" /></Slot>;

function Magnifier({ sign, box }: { sign: '+' | '-'; box?: boolean }) {
  return (
    <svg width={box ? 20 : 14} height="14" viewBox={box ? '-6 0 20 14' : '0 0 14 14'} fill="none" stroke="#5b9cc7" strokeWidth="1.300">
      {box && <path d="M-1 4h-4.500v9h11v-3" stroke="#777" strokeDasharray="2 1.500" />}
      <circle cx="5.500" cy="5.500" r="4.600" />
      <path d={sign === '+' ? 'M3 5.500h5M5.500 3v5' : 'M3 5.500h5'} />
      <path d="M9 9l4.500 4.500" strokeWidth="2" stroke="#3f7fa8" />
    </svg>
  );
}

function Plane({ t, v }: { t: string; v: string }) {
  return (
    <svg width="18" height="17" viewBox="0 0 18 17" fill="none">
      <path d="M2 1v13.500" stroke={v} /><path d="M2 14.500h14" stroke={t === 'yz' ? '#6aa860' : '#cf3a55'} strokeWidth="1.300" />
      <path d="M14 12.500l3.500 2-3.500 2z" fill={t === 'yz' ? '#6aa860' : '#cf2040'} />
      <path d="M.5 3L2 0l1.500 3z" fill={v} />
      <text x="5.500" y="9.500" fontSize="9" fill="#777">{t}</text>
    </svg>
  );
}

function BlueBtn({ children }: { children: React.ReactNode }) {
  return <span className="flex h-[23px] w-[23px] items-center justify-center rounded-[2px] border border-[#3f93d8] bg-[#8dc3f3]">{children}</span>;
}

function GraphicsToolbar() {
  return (
    <div className="flex h-[24px] items-center pl-[2px]">
      <Slot w="w-[26px]"><Magnifier sign="+" /></Slot>
      <Slot w="w-[26px]"><Magnifier sign="-" /></Slot>
      <Slot w="w-[25px]"><Magnifier sign="+" box /></Slot>
      <Slot w="w-[18px]"><Caret w={8} /></Slot>
      <Slot w="w-[31px]">
        <svg width="20" height="19" viewBox="0 0 20 19" fill="none" stroke="#777"><path d="M1 18V1h17" stroke="#bbb" /><path d="M10 2v15M2 9.500h16M8 4l2-2 2 2M8 15l2 2 2-2M4 7.500l-2 2 2 2M16 7.500l2 2-2 2" strokeWidth="1.200" /></svg>
      </Slot>
      <Sep w="w-[9px]" />
      <Slot w="w-[22px]"><TreeIcon name="view" /></Slot>
      <Slot w="w-[22px]"><Caret w={8} /></Slot>
      <Slot w="w-[27px]"><Plane t="xy" v="#6aa87a" /></Slot>
      <Slot w="w-[26px]"><Plane t="yz" v="#4a86c0" /></Slot>
      <Slot w="w-[25px]"><Plane t="xz" v="#4a86c0" /></Slot>
      <Slot w="w-[26px]">
        <svg width="17" height="15" viewBox="0 0 17 15"><path d="M0 0h6v15H0zM6 4h3v7H6z" fill="#2f80bd" /><path d="M10 4l3-2v11l-3-2z" fill="#5aa0d4" /><path d="M14 2c3 2 3 9 0 11z" fill="#c9e0f2" stroke="#5aa0d4" /></svg>
      </Slot>
      <Sep w="w-[12px]" />
      <Slot w="w-[21px]">
        <svg width="15" height="16" viewBox="0 0 15 16" fill="none" stroke="#5a9fd0" strokeWidth="1.600"><path d="M8 2.500a6 6 0 1 0 5.500 6" /><path d="M8 0l5 2.500-5 3z" fill="#4a97d0" stroke="none" /></svg>
      </Slot>
      <Slot w="w-[21px]"><Caret w={8} /></Slot>
      <Sep w="w-[16px]" />
      <Slot w="w-[19px]">
        <svg width="19" height="18" viewBox="0 0 19 18" fill="none" stroke="#8a8a8a"><path d="M1 4l7-3 10 4v12l-7-2-10-1z" fill="#eee" /><path d="M11 4l7 1v12l-7-2z" fill="#c9c9c9" /><path d="M7 1v16M9 3v14M4 3v11" stroke="#a87a60" /></svg>
      </Slot>
      <Slot w="w-[22px]"><Caret w={8} /></Slot>
      <Sep w="w-[13px]" />
      <span className="flex h-[23px] w-[45px] items-center rounded-[2px] border border-[#3f93d8] bg-[#a5d0f6]">
        <span className="flex h-full w-[23px] items-center justify-center border-r border-[#3f83c0]">
          <svg width="15" height="14" viewBox="0 0 15 14"><path d="M0 5h4l8-5v14L4 9H0z" fill="#3f83b8" /><path d="M13.500 4v6" stroke="#fff" /></svg>
        </span>
        <span className="flex grow justify-center"><Caret w={9} /></span>
      </span>
      <Slot w="w-[30px]">
        <svg width="17" height="15" viewBox="0 0 17 15" fill="none" stroke="#8a86a8"><path d="M1 1h13v10H1z" /><path d="M4 4h12.500v10H4zM1 1l3 3M14 1l2.500 3M1 11l3 3" fill="#e5e8f5" fillOpacity=".6" /></svg>
      </Slot>
      <Slot w="w-[12px]"><Caret w={8} /></Slot>
      <span className="ml-[7px] flex gap-[3px]">
        <BlueBtn><svg width="17" height="15" viewBox="0 0 17 15" fill="none" stroke="#5a86ac"><rect x=".5" y=".5" width="16" height="14" /><path d="M8 3v8M4 7l4 4" stroke="#3a6fa8" /><path d="M8 11l5-4" stroke="#c8305a" strokeWidth="1.400" /></svg></BlueBtn>
        <BlueBtn><svg width="17" height="15" viewBox="0 0 17 15" fill="none" stroke="#3f78a8"><rect x=".5" y=".5" width="16" height="14" /><path d="M3 3h11v9H3zM3 6h11M3 9h11M6.500 3v9M10.500 3v9" /></svg></BlueBtn>
        <BlueBtn><svg width="17" height="15" viewBox="0 0 17 15" fill="none" stroke="#5a86ac"><rect x=".5" y=".5" width="16" height="14" /><path d="M12.500 2v4" stroke="#e04a30" strokeWidth="3" /><path d="M12.500 6v3" stroke="#f0c030" strokeWidth="3" /><path d="M12.500 9v3" stroke="#3f9a60" strokeWidth="3" /></svg></BlueBtn>
      </span>
      <Slot w="w-[28px]">
        <svg width="16" height="16" viewBox="0 0 16 16" fill="none" stroke="#3f86b8" strokeWidth="3.200">
          <circle cx="8" cy="8" r="5.800" strokeDasharray="4.870 1.200" />
          <path d="M8 0l-3 5M15 4l-6 0M15 12l-3-5M8 16l3-5M1 12h6M1 4l3 5" stroke="#fbfcff" strokeWidth="1" />
        </svg>
      </Slot>
      <Slot w="w-[16px]"><Caret w={8} /></Slot>
      <span className="w-[4px]" />
      <Slot w="w-[26px]">
        <svg width="16" height="12" viewBox="0 0 16 12"><path d="M0 2h3l1-2h8l1 2h3v10H0z" fill="#3a86bd" /><circle cx="8" cy="6.500" r="3.600" fill="none" stroke="#e3f0fa" strokeWidth="1.300" /></svg>
      </Slot>
      <Slot w="w-[24px]">
        <svg width="16" height="18" viewBox="0 0 16 18" fill="#fff" stroke="#8f9aa5"><path d="M4 1h8v5H4z" /><path d="M.5 6h15v7H.5z" fill="#8fb4d4" /><path d="M3.500 10h9v7h-9z" /></svg>
      </Slot>
    </div>
  );
}

/* ---------- 3D plot ---------- */

type Quad = [Pt, Pt, Pt, Pt]; // top-left, top-right, bottom-left, bottom-right

interface Block {
  back: Quad;
  front: Quad;
  fill?: Quad;
  hook: number;
}

const blocks: Block[] = [
  {
    back: [[1096.7, 205.4], [1274.3, 228.5], [1030, 728.5], [1210.3, 748]],
    front: [[1090.7, 223], [1267.5, 240], [1027.3, 728], [1207, 747.8]],
    fill: [[1094.3, 215.4], [1268.3, 237], [1030.7, 726], [1206, 747.5]],
    hook: 1,
  },
  {
    back: [[1326.7, 235.8], [1500, 257.9], [1264, 755.3], [1440.3, 776]],
    front: [[1314.3, 251.4], [1487, 273], [1252.3, 755.7], [1430, 775]],
    fill: [[1320.5, 245.2], [1492.3, 267.4], [1258.3, 755.7], [1432, 775]],
    hook: 0.6,
  },
  {
    back: [[1555.2, 265.6], [1729.2, 288.4], [1493.5, 783], [1668.7, 803.6]],
    front: [[1533.8, 281.7], [1708, 304], [1474.5, 782.1], [1650, 803]],
    fill: [[1543.3, 273.7], [1715.3, 295], [1484, 782.1], [1656.4, 802.7]],
    hook: 0.6,
  },
  {
    back: [[1781, 295.1], [1953.8, 317.9], [1720.9, 809.8], [1895.2, 830.8]],
    front: [[1753.3, 309.8], [1920.5, 332.1], [1695.2, 808.5], [1863.6, 829.5]],
    hook: 1,
  },
];

const levels = [0.061, 0.146, 0.174, 0.259, 0.286, 0.371, 0.399, 0.485, 0.513, 0.598, 0.626, 0.711, 0.74, 0.825, 0.852, 0.938];

const mix = (a: Pt, b: Pt, t: number): Pt => [a[0] + (b[0] - a[0]) * t, a[1] + (b[1] - a[1]) * t];
const at = (q: Quad, u: number, t: number): Pt => mix(mix(q[0], q[2], t), mix(q[1], q[3], t), u);
const path = (pts: Pt[]) => 'M' + pts.map((p) => `${p[0].toFixed(1)} ${p[1].toFixed(1)}`).join('L');

function Wire({ b, open }: { b: Block; open?: boolean }) {
  const { back: k, front: f } = b;
  return (
    <g fill="none" stroke="#0c0c10" strokeWidth="1">
      <path d={path([k[0], k[1], k[3]])} />
      <path d={path([k[0], k[2]])} />
      <path d={path([k[0], f[0], f[2], f[3], k[3]])} strokeWidth="1.200" />
      <path d={path([f[2], k[2], k[3]])} strokeWidth="1.400" />
      {open && <path d={path([f[0], f[1], f[3]])} />}
      {open && <path d={path([f[1], k[1]])} />}
      {!open && <path d={path([k[1], mix(k[1], f[1], b.hook)])} />}
      {levels.map((t) => (
        <g key={t}>
          <path d={path([mix(f[0], f[2], t), mix(k[0], k[2], t), mix(k[1], k[3], t), mix(mix(k[1], k[3], t), mix(f[1], f[3], t), b.hook)])} />
          {open && <path d={path([mix(f[0], f[2], t), mix(f[1], f[3], t)])} />}
        </g>
      ))}
    </g>
  );
}

function Cyl({ l, r, c, h = 30 }: { l: Pt; r: Pt; c: Pt; h?: number }) {
  const mx = (l[0] + r[0]) / 2;
  return (
    <g fill="none" stroke="#15150c" strokeWidth="1.100">
      <path d={`M${l[0] - 3.6} ${l[1] + h}L${l[0]} ${l[1]}Q${mx} ${(l[1] + r[1]) / 2 - 8} ${r[0]} ${r[1]}L${r[0] - 3} ${r[1] + h + 1}Q${mx - 3} ${(l[1] + r[1]) / 2 + h - 8} ${l[0] - 3.6} ${l[1] + h}`} />
      <path d={`M${c[0]} ${c[1]}L${c[0] - 3.5} ${c[1] + h}`} />
    </g>
  );
}

/* soft spot in a block's own (u, t) frame, fading out radially */
function Spot({ q, u, t, rx, ry, c, o = 1 }: { q: Quad; u: number; t: number; rx: number; ry: number; c: string; o?: number }) {
  const p = at(q, u, t);
  const id = `g${c.slice(1)}`;
  return (
    <g>
      <radialGradient id={id}>
        <stop offset="0" stopColor={c} />
        <stop offset=".35" stopColor={c} stopOpacity=".8" />
        <stop offset=".7" stopColor={c} stopOpacity=".28" />
        <stop offset="1" stopColor={c} stopOpacity="0" />
      </radialGradient>
      <ellipse cx={p[0]} cy={p[1]} rx={rx} ry={ry} fill={`url(#${id})`} opacity={o} transform={`rotate(7 ${p[0]} ${p[1]})`} />
    </g>
  );
}

function Strip({ q, a, b, c }: { q: Quad; a: number; b: number; c: string }) {
  return <path d={path([at(q, 0, a), at(q, 1, a), at(q, 1, b), at(q, 0, b)]) + 'z'} fill={c} />;
}

const gapMid = [0.103, 0.216, 0.328, 0.442, 0.555, 0.668, 0.782, 0.895];

function Plot() {
  const f1 = blocks[0].fill!;
  const f2 = blocks[1].fill!;
  const f3 = blocks[2].fill!;
  const poly = (q: Quad) => path([q[0], q[1], q[3], q[2]]) + 'z';
  const arrowRows: [number, number, number, number, number][] = [
    [1776, 352, 1925, 366, 0.4], [1768, 410, 1920, 427, 0.35], [1762, 470, 1917, 484, 0.45],
    [1752, 529, 1910, 545, 0.8], [1746, 587, 1903, 604, 1], [1738, 647, 1896, 664, 1],
    [1732, 706, 1888, 724, 0.9], [1728, 765, 1876, 782, 0.9],
  ];
  const faintRows: [number, number, number, number][] = [[1776, 378, 1925, 398], [1770, 437, 1918, 455], [1762, 494, 1905, 514], [1746, 676, 1900, 696], [1735, 737, 1880, 756]];
  return (
    <svg width="1630" height="859" viewBox="872 75 1630 859" className="block font-['DejaVu_Sans','Noto_Sans_CJK_SC',sans-serif]" fontSize="14.670" fill="#161616">
      <defs>
        <linearGradient id="bg" x1="0" y1="0" x2="0" y2="1">
          <stop offset="0" stopColor="#fcfdff" /><stop offset=".35" stopColor="#f6f9ff" /><stop offset="1" stopColor="#e7f0fc" />
        </linearGradient>
        <linearGradient id="hsv" x1="0" y1="0" x2="0" y2="1">
          <stop offset="0" stopColor="#f00" /><stop offset=".02" stopColor="#ff0010" /><stop offset=".167" stopColor="#f0f" /><stop offset=".343" stopColor="#00f" />
          <stop offset=".49" stopColor="#0ff" /><stop offset=".667" stopColor="#0f0" /><stop offset=".833" stopColor="#ff0" /><stop offset=".985" stopColor="#ff0800" /><stop offset="1" stopColor="#f00" />
        </linearGradient>
        <linearGradient id="wave" x1="0" y1="0" x2="0" y2="1">
          <stop offset="0" stopColor="#b52024" /><stop offset=".11" stopColor="#dc3b3a" /><stop offset=".157" stopColor="#ee5246" />
          <stop offset=".22" stopColor="#f87c54" /><stop offset=".275" stopColor="#f2b060" /><stop offset=".34" stopColor="#f8e07a" />
          <stop offset=".4" stopColor="#ecfc90" /><stop offset=".46" stopColor="#ccffa4" /><stop offset=".525" stopColor="#b2ffcc" />
          <stop offset=".59" stopColor="#a0ffea" /><stop offset=".65" stopColor="#8ee6f8" /><stop offset=".73" stopColor="#6cb8f6" />
          <stop offset=".8" stopColor="#648cfe" /><stop offset=".87" stopColor="#5062f4" /><stop offset=".93" stopColor="#4c4ae6" /><stop offset="1" stopColor="#3a36c2" />
        </linearGradient>
        <clipPath id="c1"><path d={poly(f1)} /></clipPath>
        <clipPath id="c2"><path d={poly(f2)} /></clipPath>
        <clipPath id="c3"><path d={poly(f3)} /></clipPath>
        <clipPath id="cyl"><path d="M1143.700 221Q1181 217 1218 229L1215.700 261Q1180 247 1140 251z" /></clipPath>
      </defs>
      <rect x="872" y="75" width="1630" height="859" fill="url(#bg)" />

      {/* axis frame */}
      <g stroke="#77777c" strokeWidth=".9" fill="none">
        <path d="M1099.300 180.300L1956.500 292.400M1097.700 187.200L1944.700 297.800M1096 194.200L1932.800 303.100" />
        <path d="M1100 179.800L1094 199M1415 221.900L1399.300 238M1726.800 262.500L1700.700 278" />
        <path d="M1978.700 320.500L1919.800 833.900M1965.600 325.900L1908.700 832.100M1954.500 330.800L1896.800 833" />
        <path d="M1950.600 345L1977.900 334.800M1926.500 498.700L1960 491M1907.900 650L1941.500 646.400M1890.900 801.800L1922.500 802.700" />
        <path d="M1268 263L1912 348M1250 415L1897.600 498M1231.700 566.700L1879 648M1211.700 719.300L1862 797" stroke="#9a9aa0" />
      </g>

      {/* block 1 : field norm */}
      <g clipPath="url(#c1)">
        <path d={poly(f1)} fill="#e42c00" />
        {levels.map((t, i) => i % 2 === 1 && i < 15 && <Spot key={t} q={f1} u={0.6} t={t + 0.016} rx={130} ry={20} c="#e61400" o={0.9} />)}
        {gapMid.map((t, i) => <Spot key={t} q={f1} u={i % 2 ? 0.35 : 0.5} t={t + 0.008} rx={105} ry={24} c="#ea5a04" o={i === 1 ? 0.45 : 0.85} />)}
        <Spot q={f1} u={0.55} t={0.568} rx={70} ry={22} c="#ec6a06" />
        <Spot q={f1} u={0.08} t={0.8} rx={45} ry={16} c="#ec6a06" o={0.8} />
        <Spot q={f1} u={0.05} t={0.87} rx={50} ry={30} c="#ec6a06" o={0.9} />
        <Spot q={f1} u={0.95} t={0.67} rx={60} ry={20} c="#ea5a04" />
        <Spot q={f1} u={0.95} t={0.78} rx={50} ry={24} c="#ea5a04" />
        <Spot q={f1} u={0.1} t={0.28} rx={60} ry={24} c="#ea5a04" o={0.7} />
        <Spot q={f1} u={1} t={0.46} rx={50} ry={40} c="#e61000" />
        <Spot q={f1} u={0.98} t={0.61} rx={34} ry={26} c="#e61000" />
        <Strip q={f1} a={0} b={0.057} c="#e00000" />
        <Strip q={f1} a={0.931} b={1.01} c="#dd0000" />
        <Spot q={f1} u={0.52} t={0.085} rx={80} ry={42} c="#ea6808" />
        <g clipPath="url(#cyl)">
          <path d="M1135 210h90v60h-90z" fill="#e06a10" />
          <Spot q={f1} u={0.5} t={0.045} rx={48} ry={34} c="#e0a418" />
        </g>
        <Spot q={f1} u={0.52} t={0.068} rx={48} ry={15} c="#f0b818" />
        <Spot q={f1} u={0.42} t={0.075} rx={20} ry={8.5} c="#e4f818" />
        <Spot q={f1} u={0.6} t={0.076} rx={22} ry={8.5} c="#e4f818" />
        <Spot q={f1} u={0.42} t={0.0745} rx={14} ry={5.5} c="#00e070" />
        <Spot q={f1} u={0.61} t={0.0755} rx={16} ry={5.5} c="#00e070" />
        <Spot q={f1} u={0.51} t={0.079} rx={9} ry={4} c="#50e840" />
      </g>
      <path d="M1184 220L1120.700 735" stroke="#5a3a20" strokeWidth="1.300" opacity=".45" />
      <path d="M1182 235L1175 290M1149 410L1144 440" stroke="#5a3a20" strokeWidth="2.200" opacity=".5" />
      <path d={path([at(f1, 0, 0.895), at(f1, 1, 0.895)])} stroke="#8a3010" strokeWidth=".8" opacity=".7" />
      <Wire b={blocks[0]} />
      <Cyl l={[1143.7, 221]} r={[1218.3, 229.3]} c={[1184, 218]} />

      {/* block 2 : z component */}
      <g clipPath="url(#c2)">
        <path d={poly(f2)} fill="#a8dccd" />
        <Spot q={f2} u={0.18} t={0.11} rx={80} ry={45} c="#9adad8" o={0.7} />
        <Spot q={f2} u={0.85} t={0.11} rx={60} ry={38} c="#b2dcc2" o={0.8} />
        <Spot q={f2} u={0.8} t={0.22} rx={70} ry={28} c="#a0dcd6" o={0.7} />
      </g>
      <path d="M1410.700 250L1414.500 248.800L1351.700 765L1345 764L1405 290z" fill="#6fa497" opacity=".75" />
      <path d={path([at(f2, 0, 0.895), at(f2, 1, 0.895)])} stroke="#5f8f84" strokeWidth=".8" opacity=".7" />
      <Wire b={blocks[1]} />
      <Cyl l={[1370, 250]} r={[1443.7, 258.8]} c={[1410, 251]} />

      {/* block 3 : x component */}
      <g clipPath="url(#c3)">
        <path d={poly(f3)} fill="#cb4238" />
        {gapMid.map((t, i) => (
          <g key={t}>
            <Spot q={f3} u={i % 2 ? 0.15 : 0.35} t={t + 0.018} rx={120} ry={27} c="#c0282e" o={0.9} />
            <Spot q={f3} u={0.86} t={t + 0.035} rx={80} ry={25} c="#c0282e" o={0.9} />
          </g>
        ))}
        {[0.16, 0.272, 0.385, 0.499, 0.612, 0.725, 0.838].map((t, i) => (
          <g key={t}>
            <Spot q={f3} u={0.1} t={t + 0.006} rx={75} ry={20} c="#dc8058" o={i < 4 ? 0.85 : 0.65} />
            <Spot q={f3} u={0.5} t={t + 0.008} rx={110} ry={15} c="#d8744e" o={0.8} />
            <Spot q={f3} u={0.95} t={t + (i < 4 ? 0.018 : 0.004)} rx={75} ry={20} c="#de8c58" o={i < 3 ? 1 : 0.7} />
          </g>
        ))}
        <Spot q={f3} u={0.62} t={0.732} rx={70} ry={15} c="#e09058" />
        <Strip q={f3} a={0} b={0.055} c="#d45e44" />
        <Spot q={f3} u={0.6} t={0.075} rx={88} ry={56} c="#dc9458" />
        <Spot q={f3} u={0.61} t={0.065} rx={52} ry={44} c="#e4cc70" />
        <Strip q={f3} a={0.934} b={1.01} c="#d45c46" />
      </g>
      <path d="M1634.300 282.600L1641 276.800L1583.300 792.900L1573.400 792.400z" fill="#8a3424" opacity=".5" />
      <path d="M1634.300 282.600L1641 276.800L1620 440L1616 440z" fill="#8a3018" opacity=".3" />
      <Wire b={blocks[2]} />
      <Cyl l={[1593.5, 280.4]} r={[1667, 288.4]} c={[1635, 281]} />

      {/* block 4 : arrows */}
      <g stroke="#c81e2c" strokeWidth="1.100">
        {arrowRows.map(([x1, y1, x2, y2, o], r) => (
          <g key={r} opacity={o}>
            {Array.from({ length: 7 }, (_, k) => {
              const cx = x1 + ((x2 - x1) * k) / 6.3;
              const cy = y1 + ((y2 - y1) * k) / 6.3;
              return Array.from({ length: 7 }, (_, j) => {
                const dx = -9 + ((j * 5 + k * 2) % 8) * 2.6;
                const s = (7 - r) * 0.05 + 0.08;
                const y = cy - dx * s + ((j * 3 + k * 5) % 4) - 1.5;
                return <path key={`${k}-${j}`} d={`M${cx + dx} ${y}l${2 + ((j + k) % 3)} ${-0.5 - s * 3}`} />;
              });
            })}
          </g>
        ))}
      </g>
      <g strokeWidth=".8" opacity=".4">
        {faintRows.map(([x1, y1, x2, y2], r) =>
          Array.from({ length: 18 }, (_, k) => (
            <path key={`${r}-${k}`} stroke={k % 3 ? '#a0506a' : '#5060c0'} d={`M${x1 + ((x2 - x1) * k) / 18} ${y1 + ((y2 - y1) * k) / 18 + ((k * 5) % 7) - 3}l3 -1.200`} />
          )),
        )}
      </g>
      <g stroke="#d01828" strokeWidth="1.800">
        <path d="M1817 328l8-4M1836 328l12 2M1838 332l14-5M1842 326l10 3M1861 329l10 2M1865 332l13-3" />
      </g>
      <Wire b={blocks[3]} open />
      <g fill="none" stroke="#0c0c10" strokeWidth="1.100">
        <path d="M1815.800 309.500Q1852 306 1888.500 317.900Q1850 322 1815.800 309.500M1815.800 310L1811.800 340Q1850 352 1885.700 347.800L1888.500 318M1811.800 340Q1850 333 1885.700 347.800M1845 317L1842.300 347.800M1858.500 310.300L1856 341" />
      </g>

      {/* axis labels */}
      <g>
        <text x="1098" y="165">0</text>
        <text x="1539.500" y="175" fontSize="13">m</text>
        <text x="1404.500" y="206.500">0.01</text>
        <text x="1719" y="248.500">0.02</text>
        <text x="1990.500" y="341">15</text>
        <text x="1972.500" y="497">10</text>
        <text x="1954" y="652">5</text>
        <text x="1938" y="810">0</text>
        <text x="1903" y="855">4</text>
        <text x="1926" y="855">0</text>
        <text x="1996" y="588" textLength="60">×10<tspan dy="-5" fontSize="10">−3</tspan><tspan dy="5"> m</tspan></text>
        <text x="1916" y="878" textLength="60">×10<tspan dy="-5" fontSize="10">−3</tspan><tspan dy="5"> m</tspan></text>
      </g>

      {/* orientation triad */}
      <path d="M924.500 881L927.500 856" stroke="#4a86c0" strokeWidth="2" />
      <path d="M923.500 857l4.500-12 4 12.500z" fill="#4a7fb5" />
      <path d="M925 882.500L951 886" stroke="#c81e58" strokeWidth="2" />
      <path d="M950 882l11 5-12 3z" fill="#c81e58" />
      <circle cx="922" cy="885" r="2.500" fill="#5a9a50" />
      <text x="926" y="842">z</text><text x="965" y="892">x</text><text x="915" y="887">y</text>

      {/* captions */}
      <g className="font-['Open_Sans','Noto_Sans_CJK_SC',sans-serif]">
        <text x="891" y="105.500" textLength="262">特征频率=0.10692+4.2944E-5i THz</text>
        <text x="1371" y="105.500" textLength="631" xmlSpace="preserve">多切面: 电场模 (V/m)  多切面: 电场，z 分量 (V/m)  多切面: 电场，x 分量 (V/m)  体箭头: 电场</text>
      </g>

      {/* colour legends */}
      {[
        { x: 0, fill: 'url(#hsv)', max: '1.52×10', me: '5', sc: '5', min: '5.56×10', ne: '−7', t: [['1.4', 228], ['1.2', 320], ['1', 412], ['0.8', 504], ['0.6', 596], ['0.4', 687.5], ['0.2', 779]] },
        { x: 129.5, fill: 'url(#wave)', max: '7.63×10', me: '4', sc: '4', min: '-5.64×10', ne: '4', t: [['6', 259], ['4', 364], ['2', 469], ['0', 574.5], ['-2', 679.5], ['-4', 785]] },
        { x: 259, fill: 'url(#wave)', max: '8.11×10', me: '3', sc: '4', min: '-4.72×10', ne: '4', t: [['0', 275], ['-1', 402], ['-2', 527.8], ['-3', 654], ['-4', 780.5]] },
      ].map((b) => (
        <g key={b.x} transform={`translate(${b.x} 0)`}>
          <path d="M2116 143.500h14l-7-12.500zM2116 884.500h14l-7 12z" fill="#000" />
          <text x="2136" y="143.500">{b.max}<tspan dy="-6" fontSize="10.500">{b.me}</tspan></text>
          <text x="2152" y="162.500">×10<tspan dy="-6" fontSize="10.500">{b.sc}</tspan></text>
          <rect x="2133.500" y="173.500" width="18.500" height="698" fill={b.fill} stroke="#2b2b2b" />
          {b.t.map(([l, y]) => (
            <g key={l as string}>
              <path d={`M2133 ${y}h4.500M2148 ${y}h4`} stroke="#111" />
              <text x="2161.500" y={(y as number) + 5.3}>{l}</text>
            </g>
          ))}
          <text x="2136" y="895.500">{b.min}<tspan dy="-6" fontSize="10.500">{b.ne}</tspan></text>
        </g>
      ))}

      {/* corner badge */}
      <rect x="2482.500" y="82" width="13" height="11" rx="2" fill="#2a3f96" stroke="#8a90a8" />
      <rect x="2485" y="84" width="7" height="7" fill="#d8e070" /><path d="M2488 84h4v7h-4z" fill="#9fd0e0" />
    </svg>
  );
}

function Graphics() {
  return (
    <section className="h-[929px] w-[1633px] border border-[#cfd3de] bg-[#fbfcff]">
      <header className="flex h-[38px] items-center justify-between pr-[3px] pl-[10px]">
        <h1 className="pt-[4px] text-[26px] leading-none font-light text-[#3f4f8a]">图形</h1>
        <div className="flex items-center gap-[8px] pt-[2px]"><Caret c="#4a4a4a" /><Pin /></div>
      </header>
      <GraphicsToolbar />
      <div className="mt-[5px]"><Plot /></div>
    </section>
  );
}

function Messages() {
  return (
    <section className="mt-[6px] flex h-[205px] w-[1633px] flex-col border border-[#cfd3de] bg-[#fbfcff] text-[14.670px] text-[#1c1c1c]">
      <div className="flex h-[37px] items-end border-b border-[#d3d5dc] pl-[4px] text-[16.500px]">
        <div className="flex h-[30px] w-[69px] items-center border border-b-0 border-[#cfd1da] bg-white pt-[3px] pl-[5px] text-[#3f4f96]">
          消息
          <svg width="10" height="10" viewBox="0 0 10 10" className="ml-[9px]"><path d="M1 1l8 8M9 1l-8 8" stroke="#c2c2c2" strokeWidth="1.500" /></svg>
        </div>
        <div className="mb-px ml-[9px] flex h-[28px] w-[44px] items-center justify-center bg-[#ececed] pt-[3px]">进度</div>
        <div className="mb-px ml-[10px] flex h-[28px] w-[42px] items-center justify-center bg-[#ececed] pt-[3px]">日志</div>
      </div>
      <div className="flex h-[35px] items-center pl-[8px]">
        <Broom />
        <span className="ml-[6px] flex h-[24px] w-[24px] items-center justify-center rounded-[2px] border border-[#4a97d4] bg-[#84c0f2]">
          <svg width="18" height="16" viewBox="0 0 18 16" fill="#e8f3fc" stroke="#5a8ab5"><path d="M1 1h12v10H1z" /><path d="M6 6h11v9H6z" fill="#fff" /><path d="M6 6l5.500 5L17 6M6 15l4-5M17 15l-4-5" fill="none" /></svg>
        </span>
      </div>
      <div className="ml-[4px] h-[126px] w-[1623px] border border-[#cfd1d8] bg-[#fdfdff] pl-[3px] leading-[20px]">
        <div className="-mt-px">COMSOL Multiphysics 6.1.0.252</div>
        <div>
          [2025年10月14日 下午1:33] 打开的文件：
          <span className="tracking-[.28px]">C:\Users\Lab\Desktop\comsol介电光镜仿真\cavity3D(blk)_hole_new.mph</span>
        </div>
      </div>
    </section>
  );
}

export default function App() {
  return (
    <div className="relative flex h-[1186px] w-[2511px] overflow-hidden bg-[#fafcff] font-['Open_Sans','Noto_Sans_CJK_SC',sans-serif]">
      <div className="flex w-[2508px] flex-col">
        <div className="h-[2px] shrink-0 border-b border-[#d4d4d6] bg-[#f0f0f0]" />
        <main className="flex h-[1144px] pt-[5px]">
          <ModelBuilder />
          <div className="ml-[6px] flex flex-col">
            <Settings />
            <TableWindow />
          </div>
          <div className="ml-[6px] flex flex-col">
            <Graphics />
            <Messages />
          </div>
        </main>
        <footer className="flex grow items-center pl-[1678px] text-[14.670px] text-[#222]">
          <span className="pt-[11px]">4.06 GB | 4.45 GB</span>
        </footer>
      </div>
      <div className="w-[2px] bg-black" />
      <div className="w-px bg-[#9a9a9a]" />
      <div className="absolute top-[939px] right-[3px] flex h-[39px] w-[29px] items-center justify-end rounded-l-full bg-linear-to-r from-[#5f93f8] to-[#2f74f6] pr-[9px]">
        <svg width="8" height="14" viewBox="0 0 8 14"><path d="M7 1L1.500 7L7 13" fill="none" stroke="#fff" strokeWidth="2.300" /></svg>
      </div>
      <div className="absolute top-[962px] right-[31px]"><Caret c="#4a4a4a" w={8} /></div>
    </div>
  );
}
